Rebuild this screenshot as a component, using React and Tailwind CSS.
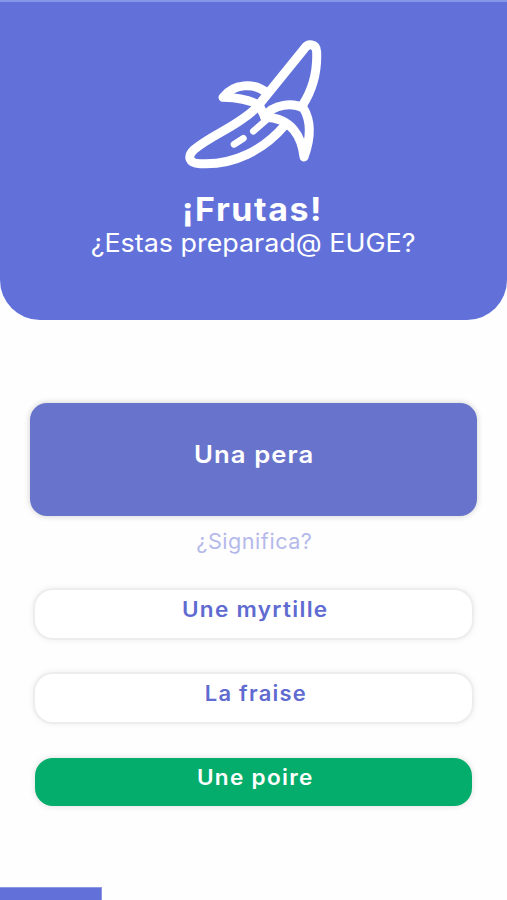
import clsx from "clsx"

const answers = [
    { text: 'Une myrtille', width: 'scale-x-[1.075]', correct: false },
    { text: 'La fraise', width: 'scale-x-[1.045]', correct: false },
    { text: 'Une poire', width: 'scale-x-[1.075]', correct: true },
]

function BananaIcon({ className }) {
    return (
        <svg
            className={className}
            viewBox="0 0 510 450"
            fill="none"
            stroke="currentColor"
            strokeWidth="27"
            strokeLinecap="round"
            strokeLinejoin="round"
        >
            {/* Fruit tip */}
            <path d="M270 220 L403 56 C414 39 439 40 440 66 C442 120 431 174 398 225" />
            {/* Left peel */}
            <path d="M289 188 C253 157 190 160 159 202 C200 203 237 208 268 226 L284 260" />
            {/* Right peel */}
            <path d="M284 260 C310 220 370 218 400 234 C422 270 425 318 402 381 C396 325 367 262 284 262" />
            {/* Lower body */}
            <path d="M260 232 C205 288 125 314 73 358 C50 380 57 400 90 401 C191 407 282 360 346 284" />
            <path d="M192 343 L220 325 M250 304 L288 271" strokeWidth="20" />
        </svg>
    )
}

export default function App() {
    return (
        <div className="flex h-[900px] w-full flex-col overflow-hidden bg-[#fefefe] font-['Inter','Noto_Sans',sans-serif]">
            {/* Header */}
            <header className="flex h-80 shrink-0 flex-col items-center rounded-b-[40px] border-t-2 border-[#8595e8] bg-[#6271da] pt-7 text-white">
                <BananaIcon className="ml-[3px] h-[150px] w-[170px]" />
                <h1 className="mt-[11px] mr-[2px] scale-x-[1.06] text-[32px] leading-[38px] font-bold tracking-[1.5px]">¡Frutas!</h1>
                <p className="-mt-px scale-x-[1.075] text-[25px] leading-[30px] whitespace-nowrap">¿Estas preparad@ EUGE?</p>
            </header>

            {/* Question */}
            <main className="flex flex-col items-center pt-[83px]">
                <div className="flex h-[113px] w-[447px] justify-center rounded-[17px] bg-[#6874cb] pt-[36px] shadow-[0_0_6px_rgba(0,0,0,0.2)]">
                    <h2 className="ml-px scale-x-[1.07] text-[24px] leading-8 font-semibold tracking-[1px] text-white">Una pera</h2>
                </div>
                <p className="mt-2.5 ml-0.5 scale-x-[1.03] text-[21px] leading-8 tracking-[0.5px] text-[#b5b9ea]">¿Significa?</p>

                {/* Answers */}
                <div className="mt-[32px] flex w-[437px] flex-col gap-9">
                    {answers.map((answer) => (
                        <button
                            key={answer.text}
                            className={clsx(
                                'flex h-12 justify-center rounded-[18px] pt-1.5 pl-1 text-[21px] leading-7 font-semibold tracking-[1.2px]',
                                answer.correct
                                    ? 'bg-[#04ad6b] text-white shadow-[0_0_6px_rgba(0,0,0,0.14)]'
                                    : 'bg-white text-[#5f6bd0] shadow-[0_0_0_2px_#ededed,0_0_6px_2px_rgba(0,0,0,0.07)]'
                            )}
                        >
                            <span className={answer.width}>{answer.text}</span>
                        </button>
                    ))}
                </div>
            </main>

            {/* Progress */}
            <div className="mt-auto h-[13px] w-[102px] shrink-0 border-t border-r border-[#8d97e2] bg-[#6271da]" />
        </div>
    )
}
